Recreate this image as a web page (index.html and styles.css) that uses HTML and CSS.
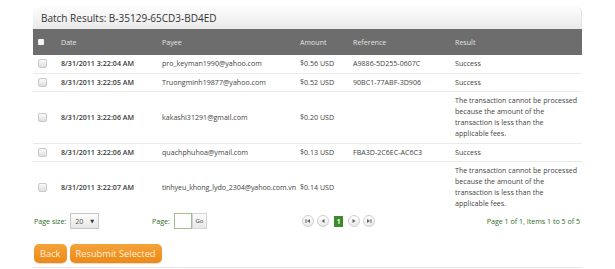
FILE: index.html
```html
<!DOCTYPE html>
<html>
<head>
<meta charset="utf-8">
<link rel="stylesheet" href="styles.css">
</head>
<body>
<div class="page">
  <div class="panel">
    <div class="title">Batch Results: B-35129-65CD3-BD4ED</div>
    <table class="grid">
      <colgroup>
        <col class="c-chk"><col class="c-date"><col class="c-payee"><col class="c-amt"><col class="c-ref"><col class="c-res">
      </colgroup>
      <thead>
        <tr><th><span class="hcb"></span></th><th>Date</th><th>Payee</th><th>Amount</th><th>Reference</th><th>Result</th></tr>
      </thead>
      <tbody>
        <tr><td><span class="cb"></span></td><td class="date">8/31/2011 3:22:04 AM</td><td>pro_keyman1990@yahoo.com</td><td>$0.56 USD</td><td>A9886-5D255-0607C</td><td>Success</td></tr>
        <tr><td><span class="cb"></span></td><td class="date">8/31/2011 3:22:05 AM</td><td>Truongminh19877@yahoo.com</td><td>$0.52 USD</td><td>90BC1-77ABF-3D906</td><td>Success</td></tr>
        <tr><td><span class="cb"></span></td><td class="date">8/31/2011 3:22:06 AM</td><td>kakashi31291@gmail.com</td><td>$0.20 USD</td><td></td><td>The transaction cannot be processed because the amount of the transaction is less than the applicable fees.</td></tr>
        <tr><td><span class="cb"></span></td><td class="date">8/31/2011 3:22:06 AM</td><td>quachphuhoa@ymail.com</td><td>$0.13 USD</td><td>FBA3D-2C6EC-AC6C3</td><td>Success</td></tr>
        <tr class="last"><td><span class="cb"></span></td><td class="date">8/31/2011 3:22:07 AM</td><td class="long">tinhyeu_khong_lydo_2304@yahoo.com.vn</td><td>$0.14 USD</td><td></td><td>The transaction cannot be processed because the amount of the transaction is less than the applicable fees.</td></tr>
      </tbody>
    </table>
    <div class="pager">
      <div class="psize"><span class="lbl">Page size:</span><span class="sel">20 <span class="arr">&#9660;</span></span></div>
      <div class="pgo"><span class="lbl">Page:</span><span class="inp"></span><span class="go">Go</span></div>
      <div class="pnav">
        <span class="circ"><svg width="6" height="6" viewBox="0 0 6 6"><rect x="0.5" y="1" width="1" height="4" fill="#666"/><path d="M5 1 L2 3 L5 5Z" fill="#666"/></svg></span>
        <span class="circ"><svg width="6" height="6" viewBox="0 0 6 6"><path d="M4.5 1 L1.5 3 L4.5 5Z" fill="#666"/></svg></span>
        <span class="cur">1</span>
        <span class="circ"><svg width="6" height="6" viewBox="0 0 6 6"><path d="M1.5 1 L4.5 3 L1.5 5Z" fill="#666"/></svg></span>
        <span class="circ"><svg width="6" height="6" viewBox="0 0 6 6"><path d="M1 1 L4 3 L1 5Z" fill="#666"/><rect x="4.5" y="1" width="1" height="4" fill="#666"/></svg></span>
      </div>
      <div class="pinfo">Page 1 of 1, Items 1 to 5 of 5</div>
    </div>
  </div>
  <div class="actions">
    <span class="btn">Back</span>
    <span class="btn">Resubmit Selected</span>
  </div>
</div>
</body>
</html>
```
FILE: styles.css
```css
html, body {
  margin: 0;
  padding: 0;
  background: #fff;
}
body {
  font-family: "Open Sans", "DejaVu Sans", sans-serif;
  font-size: 7.1px;
  color: #444;
}
.page {
  width: 549px;
  margin: 7px 0 0 33px;
}
.panel {
  display: flex;
  flex-direction: column;
}
.title {
  height: 22px;
  line-height: 22px;
  padding-left: 8px;
  font-size: 10px;
  font-weight: 500;
  color: #333;
  background: linear-gradient(#fdfdfd, #e9e9e9);
  border-radius: 5px 5px 0 0;
  border-right: 1px solid #e4e4e4;
}
.grid {
  width: 549px;
  border-collapse: collapse;
  table-layout: fixed;
}
.c-chk { width: 22px; }
.c-date { width: 101px; }
.c-payee { width: 138px; }
.c-amt { width: 53px; }
.c-ref { width: 102px; }
.c-res { width: 133px; }
.grid th {
  background: #6d6d6d;
  color: #e2e2e2;
  font-weight: normal;
  text-align: left;
  height: 26px;
  padding: 0 6px;
}
.grid td {
  padding: 3px 4px 3.5px 6px;
  line-height: 11px;
  vertical-align: middle;
  border-bottom: 1px solid #eaeaea;
  white-space: nowrap;
}
.grid td:last-child {
  white-space: normal;
}
.grid td.long {
  letter-spacing: -0.1px;
}
.grid tr.last td {
  border-bottom: none;
}
.grid td.date {
  font-weight: 600;
  color: #3a3a3a;
}
.grid th:first-child, .grid td:first-child {
  padding-left: 5px;
  padding-right: 0;
}
.hcb {
  display: block;
  width: 6px;
  height: 6px;
  background: #f4f4f4;
  border-radius: 1px;
}
.cb {
  display: block;
  width: 7px;
  height: 7px;
  border: 1px solid #c9c9c9;
  border-radius: 2px;
  background: linear-gradient(#fafafa, #dedede);
}
.pager {
  display: flex;
  align-items: center;
  height: 17px;
}
.lbl {
  color: #2f6b1c;
}
.psize {
  display: flex;
  align-items: center;
  gap: 4px;
  width: 118px;
  padding-left: 1px;
}
.sel {
  display: inline-flex;
  align-items: center;
  gap: 7px;
  width: 23px;
  height: 14px;
  padding-left: 4px;
  border: 1px solid #c7c7c7;
  background: linear-gradient(#fdfdfd, #e6e6e6);
  color: #555;
}
.arr {
  font-size: 5px;
  color: #333;
}
.pgo {
  display: flex;
  align-items: center;
  width: 150px;
}
.pgo .lbl {
  margin-right: 4px;
}
.inp {
  display: block;
  width: 16px;
  height: 14px;
  border: 1px solid #9fbf8e;
  background: #fff;
}
.go {
  display: block;
  width: 13px;
  height: 14px;
  line-height: 14px;
  text-align: center;
  font-size: 6px;
  border: 1px solid #d4d4d4;
  background: linear-gradient(#fbfbfb, #e8e8e8);
  color: #444;
}
.pnav {
  display: flex;
  align-items: center;
  gap: 3px;
}
.circ {
  display: inline-flex;
  align-items: center;
  justify-content: center;
  width: 10px;
  height: 10px;
  border: 1px solid #cfcfcf;
  border-radius: 50%;
  background: linear-gradient(#fff, #e9e9e9);
}
.cur {
  display: inline-block;
  width: 9px;
  height: 11px;
  line-height: 11px;
  text-align: center;
  background: #3b8c2a;
  color: #fff;
  font-weight: bold;
  font-size: 6.5px;
  margin: 0 2px;
}
.pinfo {
  margin-left: auto;
  color: #2f6b1c;
  padding-right: 2px;
}
.actions {
  display: flex;
  gap: 3px;
  margin-top: 14px;
  padding: 0 0 4px 1px;
  border-bottom: 1px solid #e6e6e6;
}
.btn {
  display: inline-block;
  height: 19px;
  line-height: 19px;
  padding: 0 6px;
  font-family: "Open Sans", "DejaVu Sans", sans-serif;
  font-size: 9.3px;
  color: #fff0dc;
  background: linear-gradient(#f5a23c, #ec8913);
  border-radius: 5px;
  box-shadow: 0 1px 1px rgba(0,0,0,0.15);
}
```
